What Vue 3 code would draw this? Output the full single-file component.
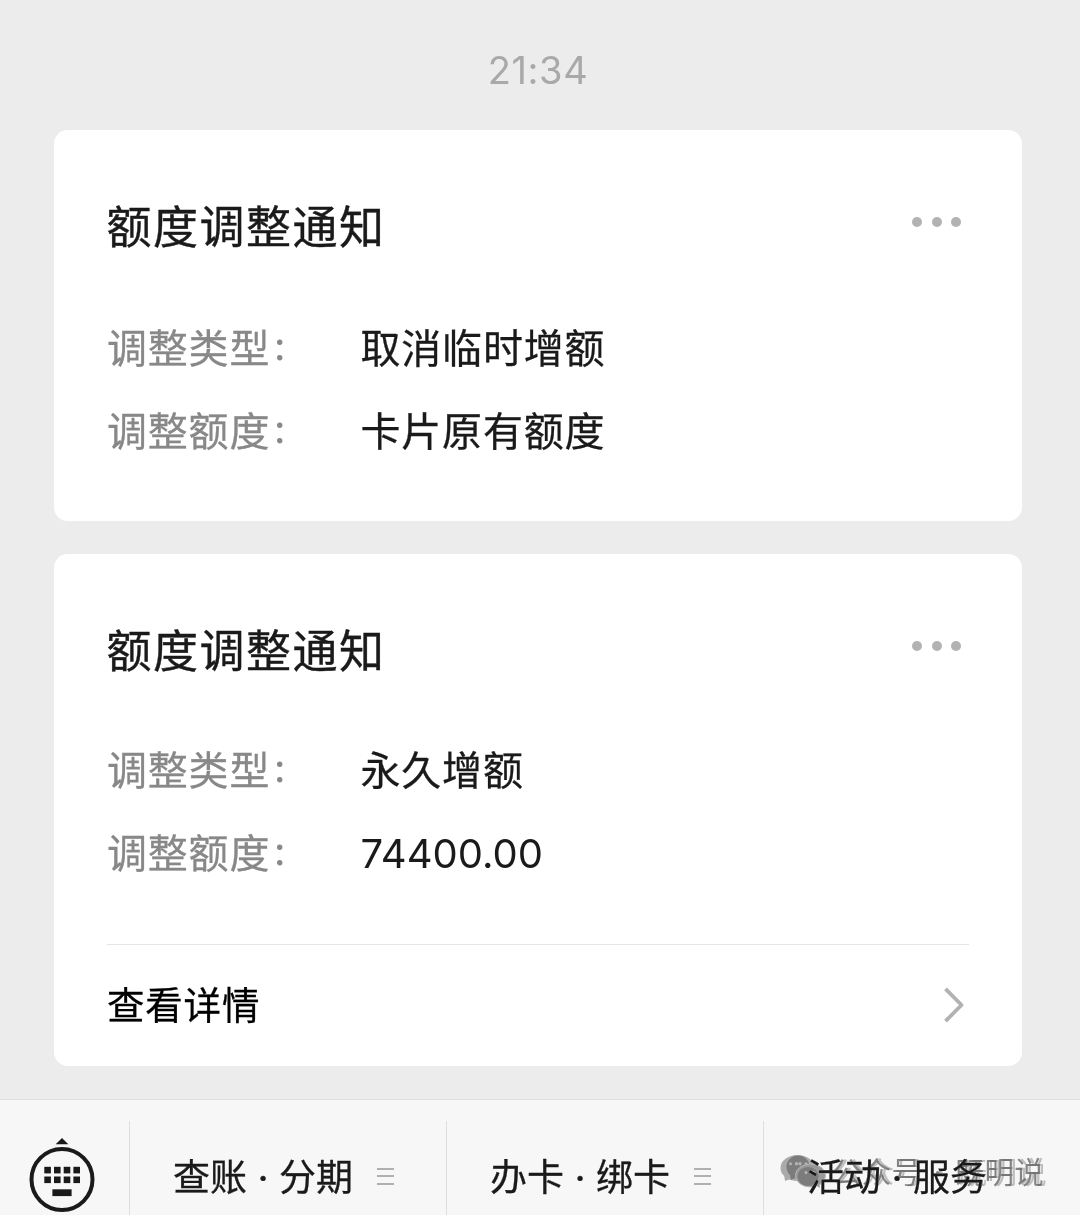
<template>
  <div class="page">
    <div class="time">21:34</div>

    <section v-for="(card, i) in cards" :key="i" class="card">
      <header class="card-header">
        <h2>{{ card.title }}</h2>
        <div class="more"><i></i><i></i><i></i></div>
      </header>

      <dl>
        <div v-for="row in card.rows" :key="row.label" class="row">
          <dt>{{ row.label }}<span class="colon">：</span></dt>
          <dd :class="{ number: row.number }">{{ row.value }}</dd>
        </div>
      </dl>

      <div v-if="card.link" class="detail">
        <span>{{ card.link }}</span>
        <svg class="arrow" width="22" height="36" viewBox="0 0 22 36">
          <path d="M2.5 1.8 L18.5 18 L2.5 34.2" fill="none" stroke="#b2b2b2" stroke-width="3.8" stroke-linejoin="round" />
        </svg>
      </div>
    </section>

    <nav class="menu-bar">
      <div class="keyboard">
        <svg width="66" height="76" viewBox="0 0 66 76">
          <path d="M33 1 L39.3 7.2 H26.7 Z" fill="#1a1a1a" />
          <circle cx="33" cy="42.5" r="30.5" fill="none" stroke="#1a1a1a" stroke-width="4" />
          <g fill="#1a1a1a">
            <rect v-for="n in 8" :key="n" :x="15.3 + ((n - 1) % 4) * 9.7" :y="n > 4 ? 39.5 : 29.8" width="6.6" height="6.6" />
            <rect x="23.4" y="52.3" width="19.2" height="6.8" />
          </g>
        </svg>
      </div>
      <div v-for="item in menus" :key="item.text" class="menu-item">
        <span>{{ item.text }}</span>
        <div v-if="item.lines" class="lines"><i></i><i></i><i></i></div>
      </div>
    </nav>

    <div class="watermark">
      <svg width="48" height="36" viewBox="0 0 48 36">
        <path d="M4 20 L5 27 L13 24 Z" fill="#aaa" />
        <ellipse cx="17.5" cy="14" rx="17" ry="13" fill="#aaa" />
        <ellipse cx="18" cy="13" rx="11.5" ry="11.5" fill="#7c7c7c" />
        <path d="M10 21 L11 26 L17 23 Z" fill="#7c7c7c" />
        <ellipse cx="30.5" cy="21.5" rx="15" ry="11.5" fill="#999" stroke="#b8b8b8" />
        <ellipse cx="28" cy="22.5" rx="10.5" ry="9.5" fill="#7c7c7c" />
        <path d="M34 30 L40 34 L39 28 Z" fill="#999" />
        <g fill="#b4b4b4">
          <circle cx="10.5" cy="9.7" r="1.5" />
          <circle cx="16.5" cy="9.7" r="1.7" />
          <circle cx="20" cy="9.7" r="1.7" />
          <circle cx="26" cy="9.7" r="1.5" />
          <circle cx="26" cy="18.5" r="1.5" />
          <circle cx="34" cy="18.5" r="1.5" />
        </g>
      </svg>
      <span>公众号 · 既明说</span>
    </div>
  </div>
</template>

<script setup>
const cards = [
  {
    title: '额度调整通知',
    rows: [
      { label: '调整类型', value: '取消临时增额' },
      { label: '调整额度', value: '卡片原有额度' }
    ]
  },
  {
    title: '额度调整通知',
    rows: [
      { label: '调整类型', value: '永久增额' },
      { label: '调整额度', value: '74400.00', number: true }
    ],
    link: '查看详情'
  }
];

const menus = [
  { text: '查账 · 分期', lines: true },
  { text: '办卡 · 绑卡', lines: true },
  { text: '活动 · 服务', lines: false }
];
</script>

<style>
body {
  background: #ececec;
  overflow: hidden;
}
</style>

<style scoped>
.page {
  position: relative;
  display: flex;
  flex-direction: column;
  box-sizing: border-box;
  height: 1215px;
  overflow: hidden;
  background: #ececec;
  color: #1a1a1a;
  font-family: Inter, "Noto Sans CJK SC", sans-serif;
}
.time {
  height: 130px;
  padding-top: 45px;
  box-sizing: border-box;
  padding-right: 4px;
  text-align: center;
  font-size: 38px;
  letter-spacing: 0.6px;
  line-height: 50px;
  color: #a9a9a9;
}
.card {
  box-sizing: border-box;
  height: 391px;
  margin: 0 58px 33px 54px;
  padding: 68px 53px 0;
  background: #fff;
  border-radius: 14px;
}
.card + .card {
  height: 512px;
}
.card-header {
  display: flex;
  justify-content: space-between;
  height: 60px;
}
h2 {
  margin: 0 0 0 -0.5px;
  font-size: 45px;
  font-weight: 400;
  line-height: 60px;
  letter-spacing: 1.5px;
  -webkit-text-stroke: 0.4px;
}
.more {
  display: flex;
  gap: 9.4px;
  padding: 18.5px 8px 0 0;
}
.more i {
  width: 10px;
  height: 10px;
  border-radius: 50%;
  background: #b2b2b2;
}
dl {
  margin: 51px 0 0;
}
.card + .card dl {
  margin-top: 49px;
}
.row {
  display: flex;
  height: 83px;
  font-size: 40px;
  line-height: 80px;
  letter-spacing: 0.8px;
  -webkit-text-stroke: 0.3px;
}
dt {
  width: 253.5px;
  color: #888;
}
.colon {
  margin-left: 2px;
  font-size: 30px;
  line-height: 1;
  vertical-align: 4px;
  -webkit-text-stroke: 0.8px;
}
dd {
  margin: 0;
}
.number {
  line-height: 79px;
  letter-spacing: 0;
  -webkit-text-stroke: 0;
}
.detail {
  display: flex;
  align-items: center;
  justify-content: space-between;
  height: 120px;
  margin-top: 47px;
  padding-right: 4px;
  border-top: 1px solid #e5e5e5;
  color: #000;
  font-size: 37.5px;
  letter-spacing: 0.8px;
}
.detail span {
  padding-bottom: 5px;
  -webkit-text-stroke: 0.3px;
}
.menu-bar {
  display: flex;
  height: 115px;
  border-top: 1px solid #dedede;
  background: #f7f7f7;
}
.keyboard {
  width: 129px;
  padding: 37px 0 0 29px;
  box-sizing: border-box;
}
.menu-item {
  display: flex;
  box-sizing: border-box;
  width: 317px;
  margin-top: 21px;
  padding-left: 43px;
  border-left: 1px solid #dedede;
  font-size: 37px;
  letter-spacing: 0.1px;
  line-height: 113px;
  white-space: nowrap;
}
.menu-item span {
  -webkit-text-stroke: 0.3px;
}
.lines {
  display: flex;
  flex-direction: column;
  gap: 5.4px;
  padding: 47px 0 0 23.5px;
}
.lines i {
  width: 17px;
  height: 2px;
  background: #b0b0b0;
}
/* sits over the menu bar */
.watermark {
  position: absolute;
  left: 780px;
  top: 1154px;
  display: flex;
  gap: 4px;
  color: rgba(95, 95, 95, 0.75);
  font-size: 29.5px;
  letter-spacing: 0.2px;
  line-height: 37px;
  word-spacing: 4px;
  white-space: nowrap;
  text-shadow: 3px 0 rgba(120, 120, 120, 0.45);
  mix-blend-mode: darken;
}
</style>
